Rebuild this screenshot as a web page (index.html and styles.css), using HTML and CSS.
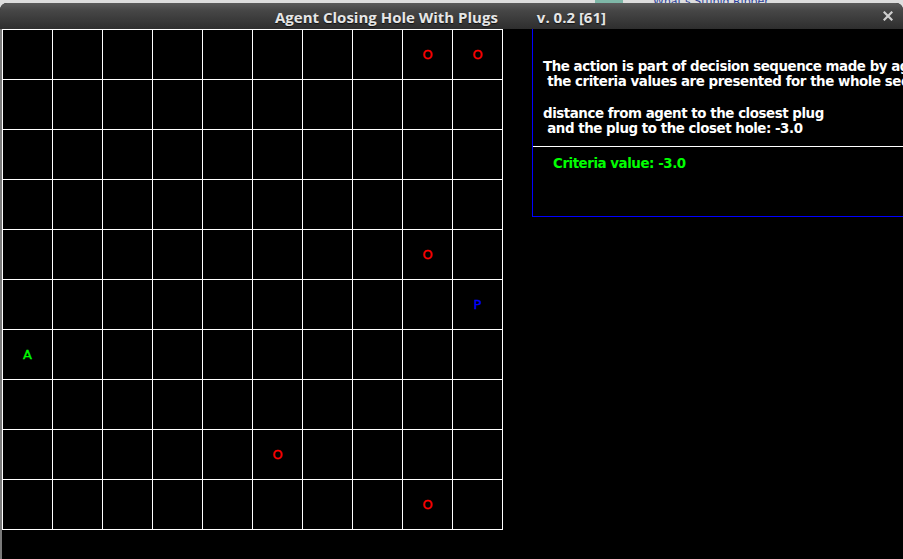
FILE: index.html
```html
<!DOCTYPE html>
<html>
<head>
<meta charset="utf-8">
<link rel="stylesheet" href="styles.css">
</head>
<body>
<div class="behind"><span class="teal"></span><span class="behind-text">What's Stupid Ripper</span></div>
<div class="window">
  <div class="titlebar">
    <span class="title">Agent Closing Hole With Plugs          v. 0.2 [61]</span>
    <svg class="close" width="10" height="10" viewBox="0 0 10 10"><path d="M1.5 1.5 L8.5 8.5 M8.5 1.5 L1.5 8.5" stroke="#cfcfcf" stroke-width="2.2" stroke-linecap="square"/></svg>
  </div>
  <div class="content">
    <div class="grid">
      <div class="c"></div><div class="c"></div><div class="c"></div><div class="c"></div><div class="c"></div><div class="c"></div><div class="c"></div><div class="c"></div><div class="c hole">O</div><div class="c hole">O</div>
      <div class="c"></div><div class="c"></div><div class="c"></div><div class="c"></div><div class="c"></div><div class="c"></div><div class="c"></div><div class="c"></div><div class="c"></div><div class="c"></div>
      <div class="c"></div><div class="c"></div><div class="c"></div><div class="c"></div><div class="c"></div><div class="c"></div><div class="c"></div><div class="c"></div><div class="c"></div><div class="c"></div>
      <div class="c"></div><div class="c"></div><div class="c"></div><div class="c"></div><div class="c"></div><div class="c"></div><div class="c"></div><div class="c"></div><div class="c"></div><div class="c"></div>
      <div class="c"></div><div class="c"></div><div class="c"></div><div class="c"></div><div class="c"></div><div class="c"></div><div class="c"></div><div class="c"></div><div class="c hole">O</div><div class="c"></div>
      <div class="c"></div><div class="c"></div><div class="c"></div><div class="c"></div><div class="c"></div><div class="c"></div><div class="c"></div><div class="c"></div><div class="c"></div><div class="c plug">P</div>
      <div class="c agent">A</div><div class="c"></div><div class="c"></div><div class="c"></div><div class="c"></div><div class="c"></div><div class="c"></div><div class="c"></div><div class="c"></div><div class="c"></div>
      <div class="c"></div><div class="c"></div><div class="c"></div><div class="c"></div><div class="c"></div><div class="c"></div><div class="c"></div><div class="c"></div><div class="c"></div><div class="c"></div>
      <div class="c"></div><div class="c"></div><div class="c"></div><div class="c"></div><div class="c"></div><div class="c hole">O</div><div class="c"></div><div class="c"></div><div class="c"></div><div class="c"></div>
      <div class="c"></div><div class="c"></div><div class="c"></div><div class="c"></div><div class="c"></div><div class="c"></div><div class="c"></div><div class="c"></div><div class="c hole">O</div><div class="c"></div>
    </div>
    <div class="panel">
      <div class="desc">
        <div class="para">
          <div class="line">The action is part of decision sequence made by agent,</div>
          <div class="line"> the criteria values are presented for the whole sequence.</div>
        </div>
        <div class="para">
          <div class="line">distance from agent to the closest plug</div>
          <div class="line"> and the plug to the closet hole: -3.0</div>
        </div>
      </div>
      <div class="value">Criteria value: -3.0</div>
    </div>
  </div>
</div>
</body>
</html>
```

FILE: styles.css
```css
html, body {
  margin: 0;
  padding: 0;
  width: 903px;
  height: 559px;
  overflow: hidden;
  background: #dedede;
}

.behind {
  height: 3px;
  display: flex;
  overflow: hidden;
}

.teal {
  margin-left: 595px;
  width: 28px;
  height: 3px;
  background: #7fb8a8;
}

.behind-text {
  margin-left: 30px;
  font: 11px "DejaVu Sans", sans-serif;
  color: #2a3f9a;
  line-height: 3px;
  height: 3px;
}

.window {
  height: 556px;
  background: #000;
  border-radius: 7px 7px 0 0;
  overflow: hidden;
  display: flex;
  flex-direction: column;
}

.titlebar {
  height: 26px;
  flex: none;
  background: linear-gradient(to bottom, #5c5c5c 0%, #464646 30%, #2e2e2e 100%);
  display: flex;
  align-items: center;
  justify-content: center;
  padding-right: 22px;
  position: relative;
}

.title {
  white-space: pre;
  font: bold 15px "Open Sans", "DejaVu Sans", sans-serif;
  color: #e6e6e6;
  margin-top: 1px;
  text-shadow: 0 1px 1px #111;
}

.close {
  position: absolute;
  right: 10px;
  top: 8px;
}

.content {
  flex: 1;
  display: flex;
  align-items: flex-start;
  background: #000;
  border-left: 2px solid #7a7a7a;
}

.grid {
  display: grid;
  grid-template-columns: repeat(10, 49px);
  grid-template-rows: repeat(10, 49px);
  gap: 1px;
  padding: 1px;
  background: #fff;
  flex: none;
}

.c {
  background: #000;
  display: flex;
  align-items: center;
  justify-content: center;
  font: 13px "DejaVu Sans", sans-serif;
  -webkit-text-stroke: 0.35px currentColor;
}

.hole { color: #ff0000; }
.agent { color: #00ff00; }
.plug { color: #0000ff; }

.panel {
  margin-left: 29px;
  flex: none;
  width: 420px;
  height: 187px;
  border-left: 1px solid #0000ff;
  border-bottom: 1px solid #0000ff;
  display: flex;
  flex-direction: column;
}

.desc {
  padding: 30px 0 10px 10px;
  border-bottom: 1px solid #fff;
  display: flex;
  flex-direction: column;
  gap: 17px;
}

.line {
  white-space: pre;
  font: bold 13.4px "DejaVu Sans", sans-serif;
  letter-spacing: -0.45px;
  line-height: 15px;
  color: #fff;
}

.value {
  padding: 9px 0 0 20px;
  white-space: pre;
  font: bold 13.4px "DejaVu Sans", sans-serif;
  letter-spacing: -0.45px;
  line-height: 15px;
  color: #00ff00;
}
```
